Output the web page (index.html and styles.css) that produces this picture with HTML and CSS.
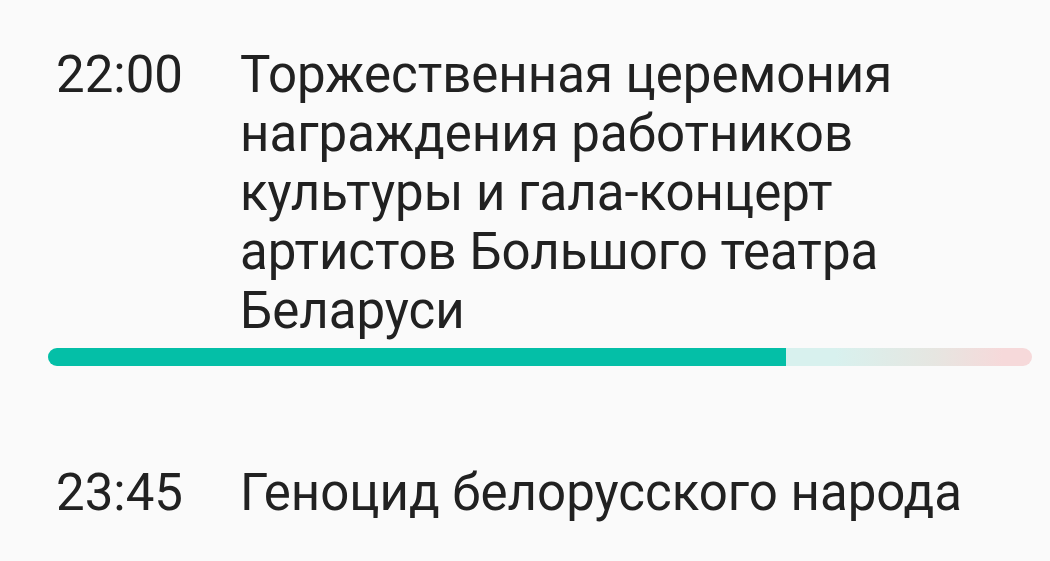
FILE: index.html
```html
<!DOCTYPE html>
<html lang="ru">
<head>
    <meta charset="UTF-8">
    <meta name="viewport" content="width=device-width, initial-scale=1.0">
    <title>Программа передач</title>
    <link rel="stylesheet" href="styles.css">
</head>
<body>
    <main class="schedule">
        <article class="programme">
            <div class="programme-row">
                <time class="programme-time" datetime="22:00">22:00</time>
                <h2 class="programme-title">Торжественная церемония награждения работников культуры и гала-концерт артистов Большого театра Беларуси</h2>
            </div>
            <div class="progress" role="progressbar" aria-label="Прошло от передачи" aria-valuemin="0" aria-valuemax="100" aria-valuenow="75">
                <div class="progress-fill" style="width: 75%"></div>
            </div>
        </article>

        <article class="programme">
            <div class="programme-row">
                <time class="programme-time" datetime="23:45">23:45</time>
                <h2 class="programme-title">Геноцид белорусского народа</h2>
            </div>
        </article>
    </main>
</body>
</html>
```
FILE: styles.css
```css
* {
    margin: 0;
    padding: 0;
    box-sizing: border-box;
}

:root {
    --bg-color: #fafafa;
    --text-color: #212121;
    --accent-color: #04bfa7;
}

body {
    background: var(--bg-color);
    color: var(--text-color);
    font-family: Roboto, sans-serif;
    font-size: 51px;
    line-height: 59px;
}

.schedule {
    display: flex;
    flex-direction: column;
    gap: 97px;
    padding: 45px 18px 40px 48px;
}

.programme-row {
    display: flex;
    padding: 0 8px;
}

.programme-time {
    flex: 0 0 184px;
}

.programme-title {
    flex: 1;
    font-size: 51px;
    font-weight: 400;
}

.progress {
    height: 18px;
    margin-top: 8px;
    border-radius: 9px;
    overflow: hidden;
    background: linear-gradient(to right, #d8f1ee 80%, #e6e6e1 90%, #f6d9da 97%);
}

.progress-fill {
    height: 100%;
    background: var(--accent-color);
}
```
